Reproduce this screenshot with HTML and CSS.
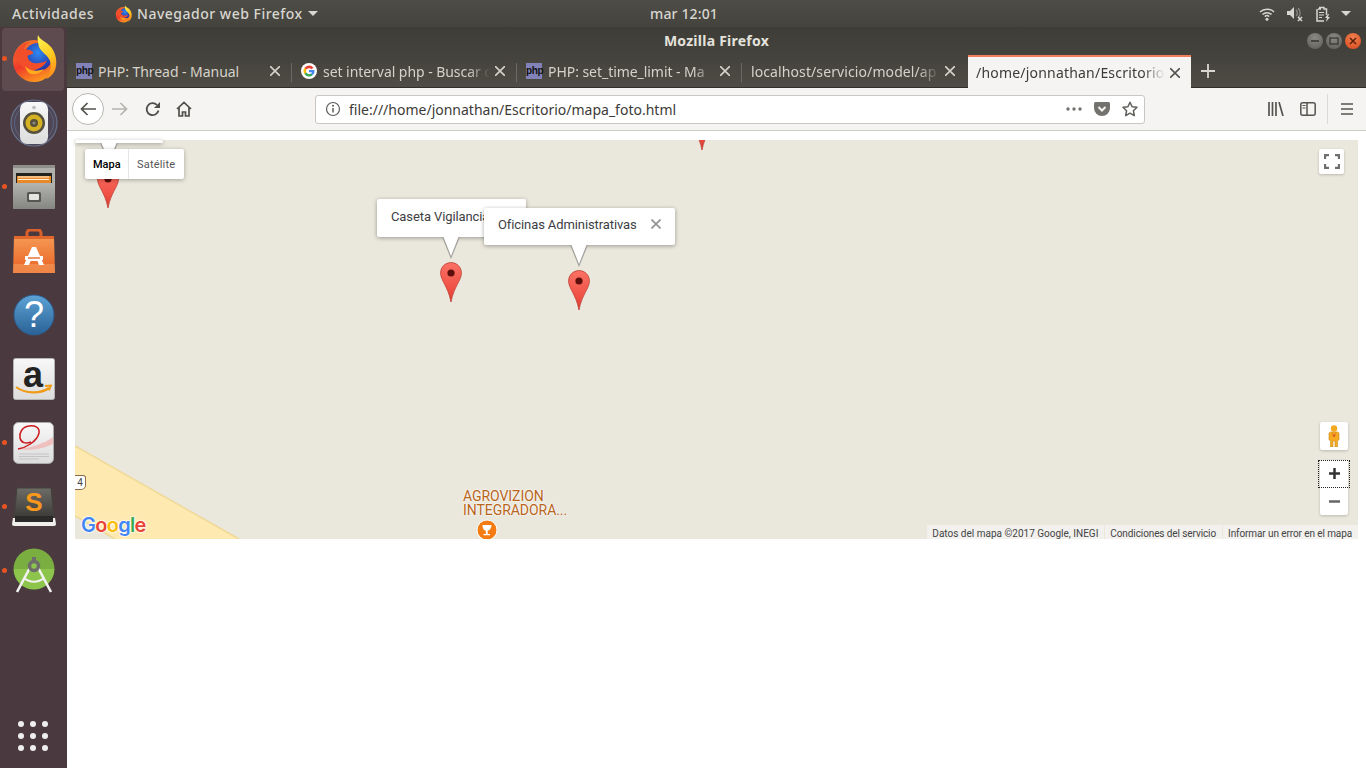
FILE: index.html
```html
<!DOCTYPE html>
<html lang="es">
<head>
<meta charset="utf-8">
<title>Mozilla Firefox</title>
<link rel="stylesheet" href="styles.css">
</head>
<body>
<svg class="defs" width="0" height="0" aria-hidden="true">
  <defs>
    <linearGradient id="fxBody" x1="0.2" y1="0" x2="0.6" y2="1"><stop offset="0" stop-color="#f9812a"/><stop offset="0.55" stop-color="#f0392b"/><stop offset="1" stop-color="#fb9a1e"/></linearGradient>
    <linearGradient id="fxTail" x1="0.3" y1="0" x2="0.6" y2="1"><stop offset="0" stop-color="#fff04f"/><stop offset="0.55" stop-color="#ffc81e"/><stop offset="1" stop-color="#ff8a1e"/></linearGradient>
    <radialGradient id="fxGlobe" cx="0.5" cy="0.35" r="0.7"><stop offset="0" stop-color="#2f8af0"/><stop offset="1" stop-color="#232a9c"/></radialGradient>
    <linearGradient id="pinFill" x1="0" y1="0" x2="0" y2="1"><stop offset="0" stop-color="#fb7165"/><stop offset="0.7" stop-color="#ef4f43"/><stop offset="1" stop-color="#d23a30"/></linearGradient>
    <linearGradient id="helpFill" x1="0" y1="0" x2="0" y2="1"><stop offset="0" stop-color="#5da3d6"/><stop offset="1" stop-color="#2a6195"/></linearGradient>
    <linearGradient id="boxFill" x1="0" y1="0" x2="0" y2="1"><stop offset="0" stop-color="#f8f8f8"/><stop offset="1" stop-color="#dcdcdc"/></linearGradient>
    <linearGradient id="drawerFill" x1="0" y1="0" x2="0" y2="1"><stop offset="0" stop-color="#b4b4b0"/><stop offset="1" stop-color="#858581"/></linearGradient>
    <linearGradient id="bagFill" x1="0" y1="0" x2="0" y2="1"><stop offset="0" stop-color="#f59b55"/><stop offset="0.75" stop-color="#ec6f2f"/><stop offset="0.76" stop-color="#f08a4a"/><stop offset="1" stop-color="#ef8546"/></linearGradient>
    <linearGradient id="subFill" x1="0" y1="0" x2="0" y2="1"><stop offset="0" stop-color="#6e6c66"/><stop offset="1" stop-color="#3b3a37"/></linearGradient>
    <symbol id="firefox" viewBox="0 0 46 48">
      <circle cx="23" cy="26" r="21" fill="url(#fxBody)"/>
      <circle cx="27" cy="22" r="14" fill="url(#fxGlobe)"/>
      <path d="M27 0c2 6 11 7 15 15 4 7 4 15 2 20-2 5-6 8-9 9 4-5 6-11 4-18-2-6-9-9-11-14-1-4-2-9-1-12z" fill="url(#fxTail)"/>
      <path d="M3 22c1-9 9-15 16-15-4 2-6 5-6 8 3-1 7 0 9 2 1 1-2 3-4 3-1 0-2 1-1 3 1 4 6 6 11 5 5-1 6-1 8-3-2 6-9 11-17 10-6-1-11-5-13-10-1-2-2-2-3-3z" fill="#f24e2a"/>
      <path d="M14 31c4 5 12 6 19 3-3 4-8 6-13 5-3-1-5-4-6-8z" fill="#ffab1f"/>
    </symbol>
    <symbol id="pin" viewBox="0 0 22 40">
      <path d="M11 .6C5 .6.6 5.2.6 11c0 7.600 7.400 13.200 10.400 29C14 24.200 21.400 18.600 21.400 11 21.400 5.200 17 .6 11 .6z" fill="url(#pinFill)" stroke="#c04036" stroke-width=".8"/>
      <circle cx="11" cy="11" r="3.600" fill="#5c0f0b"/>
    </symbol>
    <symbol id="tail" viewBox="0 0 18 22">
      <path d="M0 0h18L9 22z" fill="#a3a29c"/>
      <path d="M1.500 0h15L9 19z" fill="#fff"/>
    </symbol>
  </defs>
</svg>

<header class="topbar">
  <span class="top-item activities">Actividades</span>
  <span class="top-item appmenu">
    <svg class="top-fx" width="17" height="18"><use href="#firefox"/></svg>
    Navegador web Firefox
    <svg class="caret" width="10" height="5" viewBox="0 0 10 5"><path d="M0 0h10L5 5z" fill="#d8d6d0"/></svg>
  </span>
  <span class="clock">mar 12:01</span>
  <span class="tray">
    <svg class="tray-wifi" width="16" height="14" viewBox="0 0 16 14"><path d="M1 5a10 10 0 0 1 14 0M3.500 7.500a6.500 6.500 0 0 1 9 0M5.800 9.600a3.200 3.200 0 0 1 4.400 0" fill="none" stroke="#d8d6d0" stroke-width="1.500"/><circle cx="8" cy="12.300" r="1.500" fill="#d8d6d0"/></svg>
    <svg class="tray-sound" width="18" height="16" viewBox="0 0 18 16"><path d="M1 5h3l4-4v12l-4-4H1z" fill="#d8d6d0"/><path d="M10 4a4 4 0 0 1 0 6M12 2a7 7 0 0 1 0 10" fill="none" stroke="#8f8d87" stroke-width="1.200"/><path d="M12 11l4 4m0-4l-4 4" stroke="#d8d6d0" stroke-width="1.500"/></svg>
    <svg class="tray-battery" width="16" height="16" viewBox="0 0 16 16"><path d="M4 1.500h5v1.500h2.500v6M3 3h3M2 3v12h7" fill="none" stroke="#d8d6d0" stroke-width="1.500"/><path d="M4 6.500h5M4 9h5M4 11.500h3" stroke="#d8d6d0" stroke-width="1.200"/><path d="M13 8l-3 4h2l-1 4 4-5h-2l1-3z" fill="#d8d6d0"/></svg>
    <svg class="caret-tray" width="10" height="5" viewBox="0 0 10 5"><path d="M0 0h10L5 5z" fill="#d8d6d0"/></svg>
  </span>
</header>

<div class="desktop">
  <nav class="dock">
    <div class="dock-item is-active"><span class="run-dot"></span>
      <svg width="46" height="48"><use href="#firefox"/></svg>
    </div>
    <div class="dock-item">
      <svg width="50" height="48" viewBox="0 0 50 48">
        <circle cx="25" cy="24" r="23" fill="#4f4656" stroke="#66708a" stroke-width="1.200"/>
        <circle cx="25" cy="24" r="19.500" fill="none" stroke="#5c6480" stroke-width="1"/>
        <rect x="11" y="3" width="28" height="42" rx="7" fill="url(#boxFill)"/>
        <circle cx="25" cy="24" r="11" fill="#55503f"/>
        <circle cx="25" cy="24" r="8.500" fill="#d5b124"/>
        <circle cx="25" cy="24" r="4" fill="#57503a"/>
        <circle cx="25" cy="24" r="1.600" fill="#8d8a7c"/>
        <circle cx="25" cy="8.500" r="1.800" fill="#bbb"/>
      </svg>
    </div>
    <div class="dock-item"><span class="run-dot"></span>
      <svg width="42" height="44" viewBox="0 0 42 44">
        <rect x="0" y="0" width="42" height="44" rx="2" fill="#b0b0ac"/>
        <rect x="0" y="0" width="42" height="3" fill="#8f8f8b"/>
        <rect x="3" y="8" width="36" height="10" fill="#24221f"/>
        <rect x="4" y="11" width="34" height="8" fill="#e88a2a"/>
        <path d="M5 12h31M5 14.500h31" stroke="#fff2d8" stroke-width="1.200"/>
        <rect x="0" y="18" width="42" height="26" rx="1" fill="url(#drawerFill)"/>
        <rect x="14" y="27" width="14" height="10" rx="1.500" fill="#565653"/>
        <rect x="16" y="29" width="10" height="6" rx="1" fill="#e4e4e0"/>
      </svg>
    </div>
    <div class="dock-item">
      <svg width="42" height="44" viewBox="0 0 42 44">
        <path d="M14 8V4a3 3 0 0 1 3-3h8a3 3 0 0 1 3 3v4" fill="none" stroke="#d9602a" stroke-width="3"/>
        <path d="M1 7h40l1 37H0z" fill="url(#bagFill)"/>
        <path d="M1 7h40v3H1z" fill="#e2672d"/>
        <path d="M19 18h4l8 18h-5l-1.500-4h-7L16 36h-5z" fill="#fff"/>
        <path d="M12 27h18v4H12z" fill="#fff"/>
        <path d="M15 28.300h12v1.400H15z" fill="#e9682c"/>
      </svg>
    </div>
    <div class="dock-item">
      <svg width="42" height="42" viewBox="0 0 42 42">
        <circle cx="21" cy="21" r="20" fill="url(#helpFill)" stroke="#2d5e8f"/>
        <text class="help-q" x="21" y="33" text-anchor="middle">?</text>
      </svg>
    </div>
    <div class="dock-item">
      <svg class="amazon-icon" width="42" height="42" viewBox="0 0 42 42">
        <rect x=".5" y=".5" width="41" height="41" rx="2" fill="url(#boxFill)" stroke="#b5b5b2"/>
        <text class="amazon-a" x="20" y="29" text-anchor="middle">a</text>
        <path d="M3 29c9 7 25 7 33 1" fill="none" stroke="#f09a15" stroke-width="2.200"/>
        <path d="M32 28l6-.5-2 5" fill="none" stroke="#f09a15" stroke-width="1.800"/>
      </svg>
    </div>
    <div class="dock-item"><span class="run-dot"></span>
      <svg width="42" height="42" viewBox="0 0 42 42">
        <rect x=".5" y=".5" width="40" height="41" rx="5" fill="url(#boxFill)" stroke="#aaa"/>
        <path d="M5 27c12-1 26-5 35-12v7c-10 5-24 7-35 5z" fill="#f0b5b5" opacity=".8"/>
        <path d="M5 27C12 26 24 20 26 11 27 5 21 3 16 4 9 5 6 11 7 16c1 5 6 6 11 4" fill="none" stroke="#cc1a1f" stroke-width="1.500"/>
        <path d="M6 32h30M6 34.500h30M6 37h20" stroke="#c4c4c4" stroke-width="1"/>
      </svg>
    </div>
    <div class="dock-item"><span class="run-dot"></span>
      <svg width="44" height="40" viewBox="0 0 44 40">
        <path d="M5 1h34l3 30H2z" fill="url(#subFill)" stroke="#44423e"/>
        <path d="M1 31h42l1 6c0 1-1 2-2 2H2c-1 0-2-1-2-2z" fill="#f0efec"/>
        <rect x="3" y="29" width="38" height="6" fill="#2b2a28"/>
        <text class="sublime-s" x="22" y="24" text-anchor="middle">S</text>
      </svg>
    </div>
    <div class="dock-item"><span class="run-dot"></span>
      <svg width="44" height="46" viewBox="0 0 44 46">
        <circle cx="22" cy="21" r="20.500" fill="#7aae40"/>
        <path d="M1.800 21h40.400a20.200 20.200 0 0 1-40.400 0z" fill="#8cc44c"/>
        <path d="M5 44L21 14M39 44L23 14" stroke="#f2f2f0" stroke-width="2.600"/>
        <path d="M12 30c6 5 14 5 20 0" fill="none" stroke="#f2f2f0" stroke-width="2.200"/>
        <circle cx="22" cy="18" r="4.500" fill="#8cc44c" stroke="#6f6d6b" stroke-width="3.500"/>
        <path d="M22 9v5" stroke="#6f6d6b" stroke-width="4"/>
      </svg>
    </div>
    <div class="dock-apps">
      <span class="app-dot"></span><span class="app-dot"></span><span class="app-dot"></span>
      <span class="app-dot"></span><span class="app-dot"></span><span class="app-dot"></span>
      <span class="app-dot"></span><span class="app-dot"></span><span class="app-dot"></span>
    </div>
  </nav>

  <main class="window">
    <div class="titlebar">
      <span class="win-title">Mozilla Firefox</span>
      <span class="win-controls">
        <span class="win-btn"><svg width="10" height="10" viewBox="0 0 10 10"><path d="M1 5h8" stroke="#35342f" stroke-width="1.500"/></svg></span>
        <span class="win-btn"><svg width="10" height="10" viewBox="0 0 10 10"><rect x="1" y="2" width="8" height="6" fill="none" stroke="#35342f" stroke-width="1.200"/></svg></span>
        <span class="win-btn win-close"><svg width="10" height="10" viewBox="0 0 10 10"><path d="M2 2l6 6m0-6l-6 6" stroke="#5c1d08" stroke-width="1.500"/></svg></span>
      </span>
    </div>

    <div class="tabstrip">
      <div class="tab">
        <span class="favicon">php</span>
        <span class="tab-label">PHP: Thread - Manual</span>
        <svg class="tab-x" width="10" height="10" viewBox="0 0 10 10"><path d="M0 0l10 10m0-10L0 10"/></svg>
      </div>
      <div class="tab">
        <svg class="favicon-g" width="16" height="16" viewBox="0 0 16 16">
          <circle cx="8" cy="8" r="8" fill="#fff"/>
          <path d="M12.500 4.700A5.600 5.600 0 0 0 3.400 5l2 1.500a3.200 3.200 0 0 1 5-.3z" fill="#ea4335"/>
          <path d="M3.400 5a5.600 5.600 0 0 0 0 6l2-1.500a3.200 3.200 0 0 1 0-3z" fill="#fbbc05"/>
          <path d="M3.400 11a5.600 5.600 0 0 0 8.500.9l-1.900-1.500a3.200 3.200 0 0 1-4.600-.9z" fill="#34a853"/>
          <path d="M11.900 11.900A5.600 5.600 0 0 0 13.500 7H8v2.300h3.100a2.700 2.700 0 0 1-1.100 1.100z" fill="#4285f4"/>
        </svg>
        <span class="tab-label tab-fade">set interval php - Buscar c</span>
        <svg class="tab-x" width="10" height="10" viewBox="0 0 10 10"><path d="M0 0l10 10m0-10L0 10"/></svg>
      </div>
      <div class="tab">
        <span class="favicon">php</span>
        <span class="tab-label tab-fade">PHP: set_time_limit - Ma</span>
        <svg class="tab-x" width="10" height="10" viewBox="0 0 10 10"><path d="M0 0l10 10m0-10L0 10"/></svg>
      </div>
      <div class="tab tab-noicon tab-last">
        <span class="tab-label tab-fade">localhost/servicio/model/ap</span>
        <svg class="tab-x" width="10" height="10" viewBox="0 0 10 10"><path d="M0 0l10 10m0-10L0 10"/></svg>
      </div>
      <div class="tab tab-active">
        <span class="tab-label tab-fade">/home/jonnathan/Escritorio</span>
        <svg class="tab-x" width="10" height="10" viewBox="0 0 10 10"><path d="M0 0l10 10m0-10L0 10"/></svg>
      </div>
      <svg class="newtab" width="14" height="14" viewBox="0 0 14 14"><path d="M7 0v14M0 7h14"/></svg>
    </div>

    <div class="toolbar">
      <span class="back-btn">
        <svg width="16" height="14" viewBox="0 0 16 14"><path d="M16 7H2M7.500 1L1.500 7l6 6" fill="none" stroke="#55544f" stroke-width="1.700"/></svg>
      </span>
      <svg class="tool fwd" width="16" height="14" viewBox="0 0 16 14"><path d="M0 7h14M8.500 1l6 6-6 6" fill="none" stroke="#b3b2ae" stroke-width="1.700"/></svg>
      <svg class="tool reload" width="16" height="16" viewBox="0 0 16 16"><path d="M13.500 9.500A6 6 0 1 1 12 4" fill="none" stroke="#4f4e4a" stroke-width="1.800"/><path d="M15 1v6H9z" fill="#4f4e4a"/></svg>
      <svg class="tool home" width="16" height="16" viewBox="0 0 16 16"><path d="M1 8l7-6.500L15 8M3 6.500V15h3.500v-4h3v4H13V6.500" fill="none" stroke="#4f4e4a" stroke-width="1.700"/></svg>
      <div class="urlbar">
        <svg class="url-info" width="16" height="16" viewBox="0 0 16 16"><circle cx="8" cy="8" r="6.500" fill="none" stroke="#5f5e5a" stroke-width="1.200"/><path d="M8 7v4.500" stroke="#5f5e5a" stroke-width="1.500"/><circle cx="8" cy="4.800" r="1" fill="#5f5e5a"/></svg>
        <span class="url-text">file:///home/jonnathan/Escritorio/mapa_foto.html</span>
        <svg class="url-dots" width="16" height="4" viewBox="0 0 16 4"><circle cx="2" cy="2" r="1.700"/><circle cx="8" cy="2" r="1.700"/><circle cx="14" cy="2" r="1.700"/></svg>
        <svg class="url-pocket" width="16" height="14" viewBox="0 0 16 14"><path d="M1.500 0h13A1.500 1.500 0 0 1 16 1.500V6A8 8 0 0 1 0 6V1.500A1.500 1.500 0 0 1 1.500 0z" fill="#73726e"/><path d="M4.500 5L8 8.500 11.500 5" fill="none" stroke="#f5f4f3" stroke-width="2"/></svg>
        <svg class="url-star" width="16" height="16" viewBox="0 0 16 16"><path d="M8 1.200l2.100 4.500 4.900.6-3.600 3.400.9 4.900L8 12.200l-4.300 2.400.9-4.900L1 6.300l4.900-.6z" fill="none" stroke="#5f5e5a" stroke-width="1.500" stroke-linejoin="round"/></svg>
      </div>
      <svg class="tool library" width="16" height="14" viewBox="0 0 16 14"><path d="M1 0v14M4.500 0v14M8 0v14M11 0l4 14" fill="none" stroke="#55544f" stroke-width="1.700"/></svg>
      <svg class="tool sidebar-btn" width="16" height="14" viewBox="0 0 16 14"><rect x=".8" y=".8" width="14.400" height="12.400" rx="2" fill="none" stroke="#55544f" stroke-width="1.500"/><path d="M7 1v12" stroke="#55544f" stroke-width="1.500"/><path d="M2.500 3.500h3M2.500 6h3" stroke="#55544f" stroke-width="1"/></svg>
      <span class="tool-sep"></span>
      <svg class="tool menu-btn" width="12" height="12" viewBox="0 0 12 12"><path d="M0 1h12M0 6h12M0 11h12" stroke="#55544f" stroke-width="1.700"/></svg>
    </div>

    <section class="content">
      <div class="map">
        <svg class="map-roads" width="1283" height="399" viewBox="0 0 1283 399">
          <path d="M0 306L164 399H40L0 376z" fill="#feeab0"/>
          <path d="M0 306L164 399M0 376L40 399" fill="none" stroke="#f0d896" stroke-width="1.500"/>
        </svg>

        <div class="shield">4</div>
        <div class="poi-label">AGROVIZION<br>INTEGRADORA...</div>
        <svg class="poi-icon" width="22" height="22" viewBox="0 0 22 22">
          <circle cx="11" cy="11" r="10" fill="#f57c13" stroke="#fff"/>
          <path d="M6.500 6h9c0 3.500-1.800 5.500-3.800 5.800V15h2.300v1.200H7.500V15h2.300v-3.200C7.800 11.500 6.500 9.500 6.500 6z" fill="#fff"/>
        </svg>

        <svg class="pin pin-a" width="22" height="40"><use href="#pin"/></svg>
        <svg class="pin pin-b" width="22" height="40"><use href="#pin"/></svg>
        <svg class="pin pin-c" width="22" height="40"><use href="#pin"/></svg>
        <svg class="pin pin-d" width="22" height="40"><use href="#pin"/></svg>

        <div class="info info-clipped"></div>
        <svg class="tail tail-clipped" width="18" height="22"><use href="#tail"/></svg>

        <div class="info info-caseta">Caseta Vigilancia</div>
        <svg class="tail tail-caseta" width="18" height="22"><use href="#tail"/></svg>

        <div class="info info-oficinas">Oficinas Administrativas
          <svg class="info-x" width="10" height="10" viewBox="0 0 10 10"><path d="M.5.500l9 9m0-9l-9 9" stroke="#8f8f8f" stroke-width="1.600"/></svg>
        </div>
        <svg class="tail tail-oficinas" width="18" height="22"><use href="#tail"/></svg>

        <div class="maptype">
          <span class="maptype-btn maptype-on">Mapa</span>
          <span class="maptype-btn maptype-sat">Satélite</span>
        </div>

        <div class="ctrl fullscreen">
          <svg width="16" height="15" viewBox="0 0 16 15"><path d="M1 5V1h4M11 1h4v4M15 10v4h-4M5 14H1v-4" fill="none" stroke="#6e6e6e" stroke-width="2.300"/></svg>
        </div>

        <div class="ctrl pegman">
          <svg width="12" height="22" viewBox="0 0 12 22">
            <circle cx="6" cy="3.500" r="3.200" fill="#f5a91e"/>
            <path d="M2.500 7h7L11 8v7l-1.500 .5V22H7v-6H5v6H2.500v-6.500L1 15V8z" fill="#f5ac22" stroke="#c98c1a" stroke-width=".6"/>
            <path d="M4 7.500L6 10l2-2.500L7 12H5z" fill="#e2632a"/>
          </svg>
        </div>

        <div class="ctrl zoom">
          <span class="zoom-btn zoom-in"><svg width="11" height="11" viewBox="0 0 11 11"><path d="M5.500 0v11M0 5.500h11" stroke="#333" stroke-width="2.500"/></svg></span>
          <span class="zoom-btn"><svg width="11" height="3" viewBox="0 0 11 3"><path d="M0 1.500h11" stroke="#666" stroke-width="2.500"/></svg></span>
        </div>

        <div class="google-logo"><span class="g-blue">G</span><span class="g-red">o</span><span class="g-yellow">o</span><span class="g-blue">g</span><span class="g-green">l</span><span class="g-red">e</span></div>

        <div class="attribution">
          <span class="attr-item">Datos del mapa ©2017 Google, INEGI</span>
          <span class="attr-item attr-tight">Condiciones del servicio</span>
          <span class="attr-item attr-tight">Informar un error en el mapa</span>
        </div>
      </div>
    </section>
  </main>
</div>
</body>
</html>
```
FILE: styles.css
```css
* { box-sizing: border-box; }
html, body { margin: 0; height: 100%; }
body {
  width: 1366px;
  height: 768px;
  overflow: hidden;
  display: flex;
  flex-direction: column;
  font-family: "Noto Sans", "Open Sans", sans-serif;
  background: #fff;
}
.defs { position: absolute; }

/* GNOME top bar */
.topbar {
  height: 27px;
  flex: none;
  display: flex;
  align-items: center;
  position: relative;
  background: linear-gradient(#4e4c46, #45433d);
  color: #d8d6d0;
  font-size: 14px;
  font-weight: 500;
  letter-spacing: .5px;
}
.activities { margin-left: 12px; }
.appmenu { margin-left: 21px; display: flex; align-items: center; }
.top-fx { margin-right: 5px; }
.caret { margin-left: 5px; }
.clock { position: absolute; left: 650px; top: 4px; letter-spacing: .15px; }
.tray { margin-left: auto; display: flex; align-items: center; padding-right: 15px; }
.tray-wifi { margin-right: 11px; }
.tray-sound { margin-right: 11px; margin-top: 1px; }
.caret-tray { margin-left: 10px; }

.desktop { flex: 1; display: flex; min-height: 0; }

/* dock */
.dock {
  width: 67px;
  flex: none;
  display: flex;
  flex-direction: column;
  background: #4a3a40;
}
.dock-item {
  height: 64px;
  flex: none;
  display: flex;
  align-items: center;
  justify-content: center;
  position: relative;
}
.is-active::before {
  content: "";
  position: absolute;
  left: 2px; right: 3px; top: 1px; bottom: 0;
  background: #5e4b50;
  border-radius: 4px;
}
.dock-item svg { position: relative; }
.run-dot {
  position: absolute;
  left: 2px; top: 29px;
  width: 5px; height: 5px;
  border-radius: 50%;
  background: #e95420;
  z-index: 1;
}
.dock-apps {
  margin-top: auto;
  margin-bottom: 17px;
  margin-left: 18px;
  width: 30px;
  display: grid;
  grid-template-columns: repeat(3, 6px);
  gap: 6px;
}
.app-dot { width: 6px; height: 6px; border-radius: 50%; background: #f0eeee; }
.help-q { font: 400 36px "Liberation Sans", sans-serif; fill: #fff; }
.amazon-icon { overflow: visible; }
.amazon-a { font: 700 36px "Liberation Sans", sans-serif; fill: #222; }
.sublime-s { font: 700 26px "Liberation Sans", sans-serif; fill: #f7981d; }

/* window */
.window { flex: 1; min-width: 0; display: flex; flex-direction: column; }
.titlebar {
  height: 28px;
  flex: none;
  position: relative;
  display: flex;
  align-items: center;
  justify-content: center;
  padding-bottom: 2px;
  background: linear-gradient(#3e3d37, #44423c);
}
.win-title { color: #e4e2dc; font-size: 14px; font-weight: 700; letter-spacing: .25px; }
.win-controls { position: absolute; right: 5px; top: 6px; display: flex; gap: 3px; }
.win-btn {
  width: 16px; height: 16px;
  border-radius: 50%;
  display: flex; align-items: center; justify-content: center;
  background: radial-gradient(circle at 50% 30%, #8a8983, #5c5b55);
}
.win-close { background: radial-gradient(circle at 50% 30%, #f08050, #d8481b); }

/* tabs */
.tabstrip {
  height: 33px;
  flex: none;
  display: flex;
  align-items: stretch;
  background: linear-gradient(#44423c, #4f4c45);
  border-bottom: 1px solid #2f2e2a;
}
.tab {
  width: 225px;
  flex: none;
  display: flex;
  align-items: center;
  padding: 0 12px 0 9px;
  position: relative;
  color: #d5d2ca;
  font-size: 14px;
  letter-spacing: -.05px;
}
.tab::after {
  content: "";
  position: absolute;
  right: 0; top: 8px; bottom: 5px;
  width: 1px;
  background: #6b6963;
}
.tab-last { margin-right: 1px; letter-spacing: .1px; }
.tab-last::after { display: none; }
.favicon {
  width: 16px; height: 16px;
  flex: none;
  margin-right: 6px;
  background: #8183b8;
  color: #111;
  font: 700 10px/15px "Liberation Sans", sans-serif;
  text-align: center;
  letter-spacing: -.3px;
}
.favicon-g { flex: none; margin-right: 6px; }
.tab-label { flex: 1; min-width: 0; white-space: nowrap; overflow: hidden; }
.tab-fade {
  -webkit-mask-image: linear-gradient(to right, #000 calc(100% - 22px), transparent);
  mask-image: linear-gradient(to right, #000 calc(100% - 22px), transparent);
}
.tab-x { flex: none; margin-left: 5px; stroke: #d5d2ca; stroke-width: 1.600; }
.tab-active {
  width: 223px;
  height: 33px;
  padding: 0 11px 0 8px;
  background: #f5f4f3;
  border-top: 2px solid #ef7f5a;
  color: #3c3b37;
  letter-spacing: .2px;
}
.tab-active::after { display: none; }
.tab-active .tab-x { stroke: #55544f; }
.newtab { align-self: center; margin-left: 10px; stroke: #d8d6d0; stroke-width: 1.800; }

/* toolbar */
.toolbar {
  height: 43px;
  flex: none;
  display: flex;
  align-items: center;
  background: #f5f4f3;
  border-bottom: 1px solid #cfcdca;
  padding-left: 5px;
}
.back-btn {
  width: 32px; height: 32px;
  flex: none;
  border-radius: 50%;
  border: 1px solid #b7b6b2;
  background: #fff;
  display: flex; align-items: center; justify-content: center;
}
.tool { flex: none; }
.fwd { margin-left: 8px; }
.reload { margin-left: 17px; }
.home { margin-left: 15px; }
.urlbar {
  width: 830px;
  height: 29px;
  flex: none;
  margin-left: 123px;
  display: flex;
  align-items: center;
  background: #fff;
  border: 1px solid #c9c7c4;
  border-radius: 3px;
  padding: 0 6px 0 9px;
}
.url-text { flex: 1; margin-left: 8px; font-size: 14px; color: #3c3b37; white-space: nowrap; }
.url-dots { fill: #73726e; }
.url-pocket { margin-left: 12px; }
.url-star { margin-left: 12px; }
.library { margin-left: 123px; }
.sidebar-btn { margin-left: 16px; }
.tool-sep { width: 1px; height: 30px; background: #dcdad7; margin-left: 11px; flex: none; }
.menu-btn { margin-left: 13px; }

/* page */
.content { flex: 1; padding: 9px 8px 0; background: #fff; }
.map {
  width: 1283px;
  height: 399px;
  position: relative;
  background: #eae7dc;
  font-family: Roboto, sans-serif;
}
.map-roads { position: absolute; left: 0; top: 0; }
.shield {
  position: absolute;
  left: 0; top: 335px;
  width: 11px; height: 15px;
  background: #fff;
  border: 1px solid #8a6a4a;
  border-left: 0;
  border-radius: 0 3px 5px 0;
  font-size: 10px;
  line-height: 13px;
  text-align: center;
  color: #444;
}
.poi-label {
  position: absolute;
  left: 388px; top: 349px;
  font-size: 14px;
  line-height: 14px;
  letter-spacing: -.05px;
  color: #b8651c;
  text-shadow: 0 0 2px #fff, 0 0 2px #fff;
}
.poi-icon { position: absolute; left: 401px; top: 379px; clip-path: inset(0 0 2px 0); }

.pin { position: absolute; }
.pin-a { left: 22px; top: 28px; }
.pin-b { left: 365px; top: 122px; }
.pin-c { left: 493px; top: 130px; }
.pin-d { left: 616px; top: 0; clip-path: inset(30px 0 0 0); transform: translateY(-30px); }

.info {
  position: absolute;
  background: #fff;
  border-radius: 2px;
  box-shadow: 0 1px 4px rgba(0, 0, 0, .35);
  font-size: 13px;
  letter-spacing: -.1px;
  color: #3c4043;
  padding: 10px 14px;
  white-space: nowrap;
  line-height: 16px;
}
.info-clipped { left: 0; top: 0; width: 88px; height: 3px; padding: 0; }
.info-caseta { left: 302px; top: 59px; width: 149px; height: 38px; }
.info-oficinas { left: 409px; top: 68px; width: 191px; height: 37px; padding-top: 9px; }
.info-x { position: absolute; left: 167px; top: 11px; }
.tail { position: absolute; }
.tail-clipped { left: 25px; top: 3px; }
.tail-caseta { left: 367px; top: 97px; }
.tail-oficinas { left: 495px; top: 105px; }

.maptype {
  position: absolute;
  left: 10px; top: 9px;
  height: 30px;
  display: flex;
  background: #fff;
  border-radius: 2px;
  box-shadow: 0 1px 4px rgba(0, 0, 0, .3);
  font-size: 11px;
  color: #565656;
}
.maptype-btn { display: flex; align-items: center; padding-left: 8px; }
.maptype-on { width: 44px; color: #000; font-weight: 500; border-right: 1px solid #e6e6e6; }
.maptype-sat { width: 55px; letter-spacing: .2px; }

.ctrl {
  position: absolute;
  background: #fff;
  border-radius: 2px;
  box-shadow: 0 1px 3px rgba(0, 0, 0, .2);
  display: flex;
  align-items: center;
  justify-content: center;
}
.fullscreen { left: 1244px; top: 9px; width: 25px; height: 25px; }
.pegman { left: 1245px; top: 282px; width: 28px; height: 28px; }
.zoom { left: 1245px; top: 320px; width: 28px; height: 55px; flex-direction: column; }
.zoom-btn { width: 28px; flex: 1; display: flex; align-items: center; justify-content: center; }
.zoom-in { position: relative; }
.zoom-in::after {
  content: "";
  position: absolute;
  left: -2px; right: -2px; top: 0; bottom: 0;
  border: 1px dotted #222;
}

.google-logo {
  position: absolute;
  left: 6px; top: 373px;
  font: 600 20px/24px Inter, sans-serif;
  letter-spacing: -.7px;
  text-shadow: 0 0 2px #fff, 0 0 2px #fff, 0 0 2px #fff;
}
.g-blue { color: #4285f4; }
.g-red { color: #ea4335; }
.g-yellow { color: #fbbc05; }
.g-green { color: #34a853; }

.attribution {
  position: absolute;
  right: 0; bottom: 0;
  height: 14px;
  display: flex;
  gap: 1px;
  font-size: 10px;
  line-height: 17px;
  color: #444;
  overflow: hidden;
}
.attr-item {
  background: rgba(245, 245, 245, .7);
  padding: 0 6px 0 5px;
  white-space: nowrap;
}
.attr-tight { letter-spacing: -.1px; }
```
